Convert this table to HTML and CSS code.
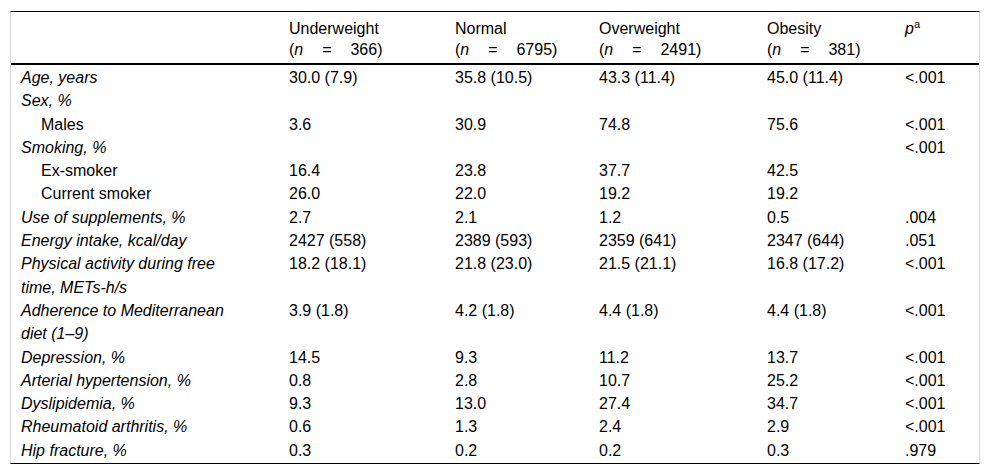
FILE: index.html
```html
<!DOCTYPE html>
<html lang="en">
<head>
<meta charset="utf-8">
<title>Table</title>
<link rel="stylesheet" href="styles.css">
</head>
<body>
<div class="wrap">
<table class="data">
  <colgroup>
    <col class="c-label">
    <col class="c-under">
    <col class="c-normal">
    <col class="c-over">
    <col class="c-obese">
    <col class="c-p">
  </colgroup>
  <thead>
    <tr>
      <th class="label"></th>
      <th>Underweight<br>(<i>n</i> = 366)</th>
      <th>Normal<br>(<i>n</i> = 6795)</th>
      <th>Overweight<br>(<i>n</i> = 2491)</th>
      <th>Obesity<br>(<i>n</i> = 381)</th>
      <th><i>p</i><sup>a</sup></th>
    </tr>
  </thead>
  <tbody>
    <tr class="first"><td class="label"><i>Age, years</i></td><td>30.0 (7.9)</td><td>35.8 (10.5)</td><td>43.3 (11.4)</td><td>45.0 (11.4)</td><td>&lt;.001</td></tr>
    <tr><td class="label"><i>Sex, %</i></td><td></td><td></td><td></td><td></td><td></td></tr>
    <tr><td class="label sub">Males</td><td>3.6</td><td>30.9</td><td>74.8</td><td>75.6</td><td>&lt;.001</td></tr>
    <tr><td class="label"><i>Smoking, %</i></td><td></td><td></td><td></td><td></td><td>&lt;.001</td></tr>
    <tr><td class="label sub">Ex-smoker</td><td>16.4</td><td>23.8</td><td>37.7</td><td>42.5</td><td></td></tr>
    <tr><td class="label sub">Current smoker</td><td>26.0</td><td>22.0</td><td>19.2</td><td>19.2</td><td></td></tr>
    <tr><td class="label"><i>Use of supplements, %</i></td><td>2.7</td><td>2.1</td><td>1.2</td><td>0.5</td><td>.004</td></tr>
    <tr><td class="label"><i>Energy intake, kcal/day</i></td><td>2427 (558)</td><td>2389 (593)</td><td>2359 (641)</td><td>2347 (644)</td><td>.051</td></tr>
    <tr><td class="label"><i>Physical activity during free time, METs-h/s</i></td><td>18.2 (18.1)</td><td>21.8 (23.0)</td><td>21.5 (21.1)</td><td>16.8 (17.2)</td><td>&lt;.001</td></tr>
    <tr><td class="label"><i>Adherence to Mediterranean diet (1–9)</i></td><td>3.9 (1.8)</td><td>4.2 (1.8)</td><td>4.4 (1.8)</td><td>4.4 (1.8)</td><td>&lt;.001</td></tr>
    <tr><td class="label"><i>Depression, %</i></td><td>14.5</td><td>9.3</td><td>11.2</td><td>13.7</td><td>&lt;.001</td></tr>
    <tr><td class="label"><i>Arterial hypertension, %</i></td><td>0.8</td><td>2.8</td><td>10.7</td><td>25.2</td><td>&lt;.001</td></tr>
    <tr><td class="label"><i>Dyslipidemia, %</i></td><td>9.3</td><td>13.0</td><td>27.4</td><td>34.7</td><td>&lt;.001</td></tr>
    <tr><td class="label"><i>Rheumatoid arthritis, %</i></td><td>0.6</td><td>1.3</td><td>2.4</td><td>2.9</td><td>&lt;.001</td></tr>
    <tr class="last"><td class="label"><i>Hip fracture, %</i></td><td>0.3</td><td>0.2</td><td>0.2</td><td>0.3</td><td>.979</td></tr>
  </tbody>
</table>
</div>
</body>
</html>
```

FILE: styles.css
```css
html, body {
  margin: 0;
  padding: 0;
  background: #ffffff;
}

.wrap {
  padding: 11px 0 0 10px;
}

.data {
  width: 970px;
  table-layout: fixed;
  border-collapse: separate;
  border-spacing: 0;
  border-top: 1px solid #000;
  border-left: 1px solid #dcdcdc;
  border-right: 1px solid #dcdcdc;
  border-bottom: 1px solid #000;
  font-family: "Liberation Sans", Arial, sans-serif;
  font-size: 16px;
  line-height: 23.3px;
  color: #000;
}

.c-label { width: 268px; }
.c-under { width: 166px; }
.c-normal { width: 144px; }
.c-over { width: 168px; }
.c-obese { width: 138px; }
.c-p { width: 84px; }

.data th {
  font-weight: normal;
  text-align: left;
  vertical-align: top;
  line-height: 21px;
  padding: 5.5px 10px 3.5px 10px;
  border-bottom: 2px solid #000;
  word-spacing: 14.5px;
  white-space: nowrap;
}

.data th sup {
  font-size: 11px;
  line-height: 0;
  vertical-align: 6px;
}

.data td {
  vertical-align: top;
  padding: 0 10px;
  white-space: nowrap;
}

.data td.label {
  padding-right: 32px;
  white-space: normal;
}

.data td.sub {
  padding-left: 30px;
}

.data tr.first td {
  padding-top: 1px;
}

.data tr.last td {
  padding-bottom: 1px;
}
```
